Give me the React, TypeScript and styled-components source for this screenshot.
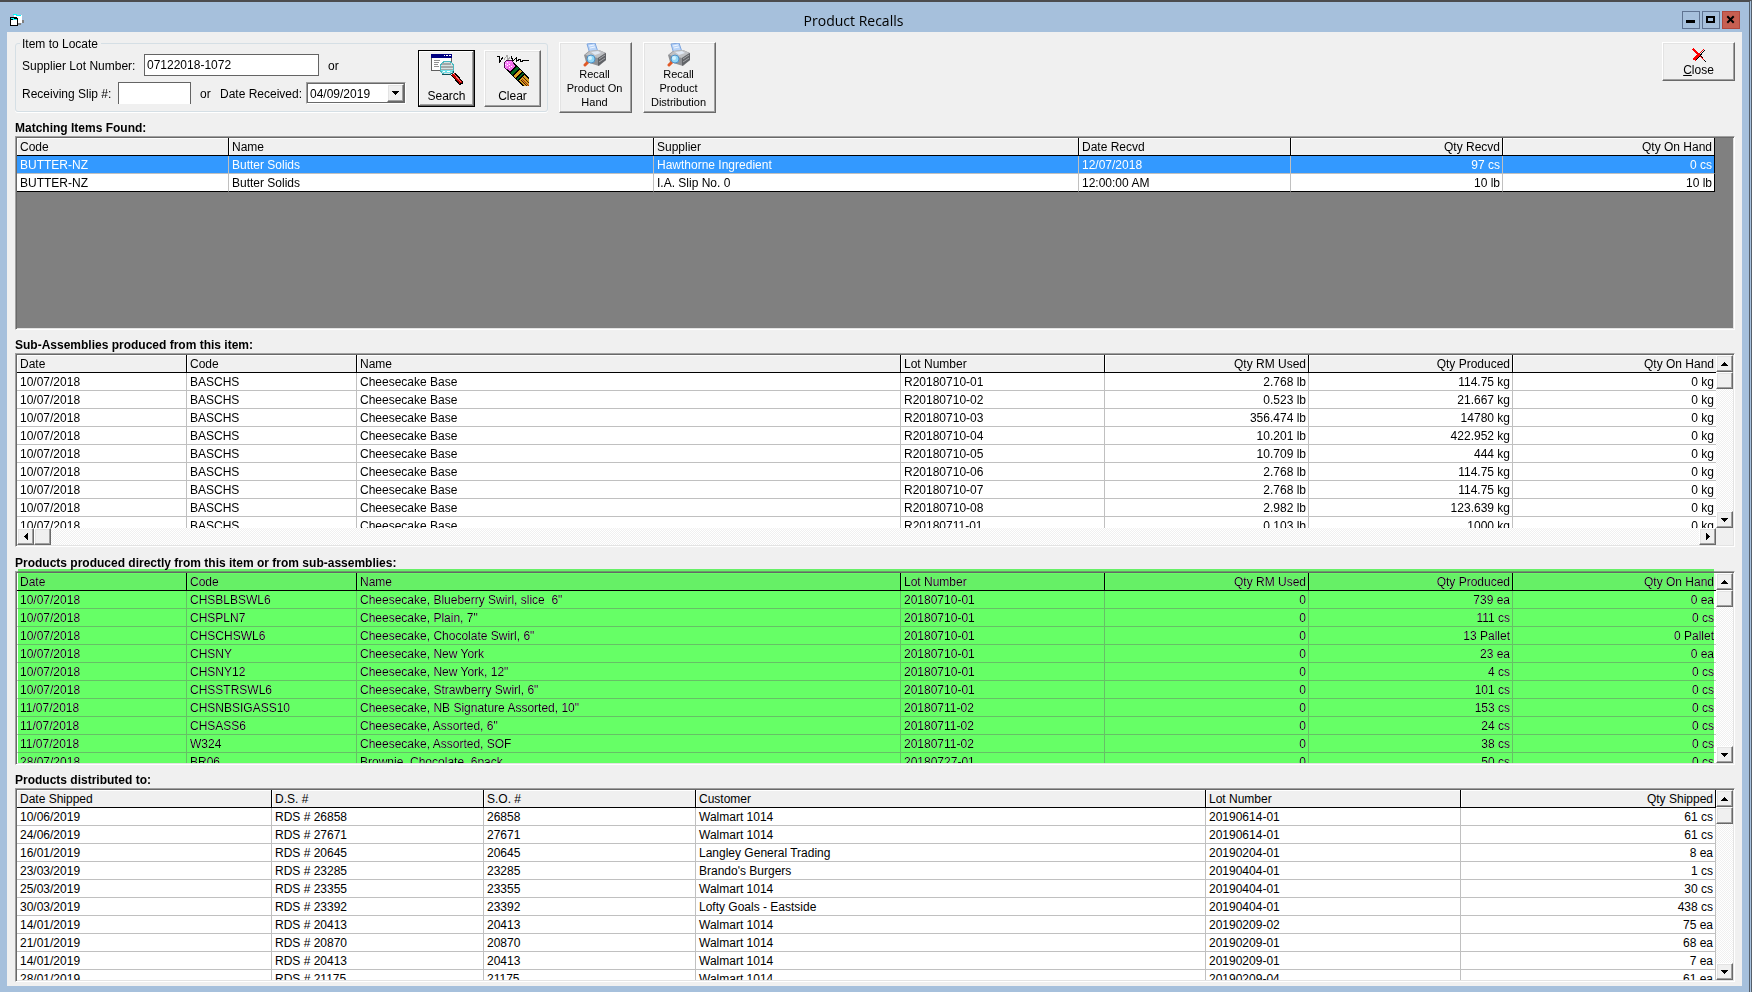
import React from "react";
import styled, { createGlobalStyle, css } from "styled-components";

const GlobalStyle = createGlobalStyle`
  *, *::before, *::after { box-sizing: border-box; }
  body {
    margin: 0;
    background: #a6c0dc;
    color: #000;
    font: 12px/14px "Liberation Sans", Arial, sans-serif;
  }
  button, input, select { font: inherit; color: inherit; }
`;

const raised = css`
  border: 1px solid;
  border-color: #fff #696969 #696969 #fff;
  box-shadow: inset -1px -1px #a0a0a0, inset 1px 1px #e3e3e3;
  background: #f0f0f0;
`;

/* ---------- window frame ---------- */

const Window = styled.main`
  display: flex;
  flex-direction: column;
  min-height: 100vh;
  padding: 0 7px 6px;
  background: #a6c0dc;
  border-top: 2px solid #4c4c4e;
  border-right: 3px double #55606c;
`;

const TitleBar = styled.header`
  display: flex;
  align-items: center;
  height: 30px;
  padding: 6px 2px 0 3px;
`;

const Title = styled.h1`
  flex: 1;
  margin: 0;
  padding-top: 2px;
  text-align: center;
  font: 400 14px/20px "Open Sans", "Noto Sans", sans-serif;
`;

const WindowButtons = styled.div`
  display: flex;
  gap: 2px;
`;

const WindowButton = styled.button<{ $danger?: boolean }>`
  display: grid;
  place-items: center;
  width: 18px;
  height: 18px;
  padding: 0;
  border: 1px solid ${(p) => (p.$danger ? "#b0473c" : "#5f7391")};
  background: ${(p) => (p.$danger ? "#c75f51" : "#a6c0dc")};
`;

const Panel = styled.div`
  flex: 1;
  padding: 4px 7px 4px 8px;
  background: #f0f0f0;
`;

/* ---------- toolbar ---------- */

const Toolbar = styled.form`
  display: flex;
  align-items: flex-start;
  gap: 11px;
`;

const Locate = styled.fieldset`
  display: flex;
  margin: 0;
  padding: 0 6px 4px 4px;
  border: 1px solid #d5dfe5;
  border-radius: 3px;
  box-shadow: 0 1px #fff;
`;

const Legend = styled.legend`
  padding: 2px 3px 0 2px;
  line-height: 12px;
`;

const LocateBody = styled.div`
  display: flex;
  gap: 9px;
`;

const Fields = styled.div`
  display: flex;
  flex-direction: column;
  gap: 6px;
  padding: 4px 3px 0 2px;
`;

const FieldRow = styled.div`
  display: flex;
  align-items: center;
  height: 22px;
`;

const FieldLabel = styled.label<{ $width: number }>`
  width: ${(p) => p.$width}px;
  padding-top: 2px;
  white-space: nowrap;
`;

const Or = styled.span`
  width: 29px;
  padding: 2px 0 0 9px;
`;

const TextBox = styled.input<{ $width: number; $open?: boolean }>`
  width: ${(p) => p.$width}px;
  height: 22px;
  padding: 0 2px;
  border: 1px solid #646464;
  border-bottom-width: ${(p) => (p.$open ? 0 : 1)}px;
  border-radius: 0;
  background: #fff;
  outline: none;
`;

const Combo = styled.div`
  display: flex;
  position: relative;
  width: 100px;
  height: 22px;
  border: 1px solid;
  border-color: #a0a0a0 #fff #fff #a0a0a0;
`;

const DateSelect = styled.select`
  appearance: none;
  flex: 1;
  padding: 2px 2px 0;
  border: 1px solid #696969;
  border-radius: 0;
  background: #fff;
  outline: none;
`;

const ComboArrow = styled.span`
  ${raised}
  position: absolute;
  top: 1px;
  right: 1px;
  bottom: 1px;
  display: grid;
  place-items: center;
  width: 17px;
  pointer-events: none;
`;

const ToolButton = styled.button<{ $default?: boolean }>`
  ${raised}
  display: flex;
  flex-direction: column;
  align-items: center;
  justify-content: space-between;
  width: 57px;
  height: 57px;
  padding: 3px 0;
  ${(p) =>
    p.$default &&
    css`
      border-color: #000;
      box-shadow: inset -1px -1px #696969, inset 1px 1px #fff, inset -2px -2px #a0a0a0;
    `}
`;

const RecallButton = styled.button`
  ${raised}
  width: 73px;
  height: 71px;
  margin-top: 6px;
  padding: 0 7px 4px 5px;
  font-size: 11px;
  line-height: 14px;

  svg { display: block; margin: 0 auto; }
`;

const CloseButton = styled.button`
  ${raised}
  width: 73px;
  height: 39px;
  margin: 6px 0 0 auto;
  padding: 2px 0 0;

  svg { display: block; margin: 0 auto 1px; }
`;

/* ---------- grids ---------- */

const Section = styled.section<{ $highlight?: boolean }>`
  position: relative;
  padding-top: ${(p) => (p.$highlight ? 1 : 0)}px;
`;

const SectionTitle = styled.h2`
  height: 23px;
  margin: 0;
  padding-top: 7px;
  font-size: 12px;
  line-height: 16px;
`;

const Highlight = styled.div`
  position: absolute;
  top: 22px;
  left: 3px;
  right: 21px;
  bottom: 2px;
  background: #66ff66;
  mix-blend-mode: darken;
  pointer-events: none;
`;

const Frame = styled.div`
  display: grid;
  grid-template-columns: minmax(0, 1fr) 17px;
  grid-template-rows: minmax(0, 1fr) auto;
  height: 194px;
  border: 1px solid;
  border-color: #a0a0a0 #fff #fff #a0a0a0;
  background: #808080;
  box-shadow: inset 1px 1px #696969, inset -1px -1px #e3e3e3;
  padding: 1px;
`;

const Viewport = styled.div<{ $filled: boolean }>`
  overflow: hidden;
  padding-right: ${(p) => (p.$filled ? 0 : 1)}px;
`;

const Table = styled.table<{ $closed: boolean; $lastLine: boolean }>`
  width: 100%;
  table-layout: fixed;
  border-collapse: separate;
  border-spacing: 0;

  ${(p) =>
    p.$closed &&
    css`
      tbody tr:last-child td { border-bottom-color: #000; }
      tr td:last-child { border-right-color: #000; }
    `}
  ${(p) =>
    !p.$lastLine &&
    css`
      tr > :last-child { border-right-width: 0; }
    `}
`;

const cellBox = css<{ $right?: boolean }>`
  height: 18px;
  padding: 2px 2px 0 3px;
  border: solid #c0c0c0;
  border-width: 0 1px 1px 0;
  line-height: 15px;
  text-align: ${(p) => (p.$right ? "right" : "left")};
  white-space: pre;
`;

const HeadCell = styled.th<{ $right?: boolean }>`
  ${cellBox}
  border-color: #000;
  background: #f0f0f0;
  box-shadow: inset 1px 1px #fff;
  font-weight: 400;
`;

const Row = styled.tr<{ $selected?: boolean }>`
  background: ${(p) => (p.$selected ? "#3399ff" : "#fff")};
  color: ${(p) => (p.$selected ? "#fff" : "#000")};
`;

const Cell = styled.td<{ $right?: boolean }>`
  ${cellBox}
`;

const ScrollTrack = styled.div<{ $horizontal?: boolean }>`
  display: flex;
  flex-direction: ${(p) => (p.$horizontal ? "row" : "column")};
  background: repeating-conic-gradient(#fff 0 25%, #f0f0f0 0 50%) 0 0 / 2px 2px;
`;

const ScrollButton = styled.button<{ $end?: boolean }>`
  ${raised}
  display: grid;
  place-items: center;
  width: 17px;
  height: 17px;
  padding: 0;
  margin: ${(p) => (p.$end ? "auto 0 0 auto" : "0")};
`;

const Thumb = styled.div`
  ${raised}
  width: 17px;
  height: 17px;
`;

const Corner = styled.div`
  background: #f0f0f0;
`;

/* ---------- icons ---------- */

const arrows = {
  up: "M0 4h7v-1h-1v-1h-1v-1h-1v-1h-1v1h-1v1h-1v1h-1z",
  down: "M0 0h7v1h-1v1h-1v1h-1v1h-1v-1h-1v-1h-1v-1h-1z",
  left: "M4 0v7h-1v-1h-1v-1h-1v-1h-1v-1h1v-1h1v-1h1v-1z",
  right: "M0 0v7h1v-1h1v-1h1v-1h1v-1h-1v-1h-1v-1h-1v-1z",
};

function Arrow({ dir }: { dir: keyof typeof arrows }) {
  const flat = dir === "up" || dir === "down";
  return (
    <svg width={flat ? 7 : 4} height={flat ? 4 : 7} shapeRendering="crispEdges" aria-hidden="true">
      <path d={arrows[dir]} />
    </svg>
  );
}

const FormIcon = () => (
  <svg width="15" height="13" viewBox="0 0 15 13" shapeRendering="crispEdges" aria-hidden="true">
    <path d="M12 6h2v3h-2zM8 9h3v2h-3z" fill="#808080" />
    <path d="M4 1h8v8h-8z" fill="#fff" />
    <path d="M3 0h4v1h-4zM6 1h5v1h-5z" fill="#0ff" />
    <path d="M0 3h7v1h1v8h-8z" fill="#000" />
    <path d="M1 6h6v5h-6z" fill="#fff" />
    <path d="M1 4h3v1h-3zM3 5h4v1h-4z" fill="#0ff" />
  </svg>
);

const SearchIcon = () => (
  <svg width="32" height="32" viewBox="0 0 32 32" shapeRendering="crispEdges" aria-hidden="true">
    <path d="M0 0h21v17h-21z" fill="#606060" />
    <path d="M1 4h19v12h-19z" fill="#fff" />
    <path d="M0 0h21v4h-21z" fill="#000080" />
    <path d="M13 1h1v1h-1zM15 1h2v1h-2zM18 1h2v1h-2z" fill="#fff" />
    <path d="M3 6h6v1h-6zM3 8h5v1h-5zM3 10h4v1h-4zM3 12h5v1h-5z" fill="#909090" />
    <circle cx="16" cy="14" r="7" fill="#d4e4e4" stroke="#48b8c0" strokeWidth="1" />
    <path d="M11 9h9v2h-9zM10 12h12v2h-12zM10 15h12v1h-12z" fill="#a4a8a8" />
    <path d="M10 16h12v1h-1v1h-1v1h-8v-1h-1v-1h-1z" fill="#70e0e8" />
    <path d="M12 17h2v1h-2zM16 17h3v1h-3z" fill="#fff" />
    <path d="M11 20h9v1h-9zM20 19h2v1h-2zM22 17h1v2h-1z" fill="#105058" />
    <path d="M22 20l9 10" stroke="#000" strokeWidth="5" />
    <path d="M22 20l8 9" stroke="#c00000" strokeWidth="3" />
    <path d="M23 20l7 8" stroke="#ff7070" strokeWidth="1" />
  </svg>
);

const EraserIcon = () => (
  <svg width="32" height="32" viewBox="0 0 32 32" aria-hidden="true">
    <g shapeRendering="crispEdges">
      <path d="M0 3l2-1 1 2-1 5 4-6" fill="none" stroke="#000" />
      <path d="M7 6l3-5 1 5 2-3" fill="none" stroke="#a8a8a8" />
      <path d="M14 2l2 5 3-3v4l4-3 1 3 3-2h5" fill="none" stroke="#000" />
      <path d="M12 11L34 33" stroke="#000" strokeWidth="10" />
      <circle cx="12" cy="11" r="5" fill="#ff80ff" stroke="#501050" />
      <path d="M12 11l4 4" stroke="#f070e8" strokeWidth="8" />
      <path d="M16 15l1 1" stroke="#000" strokeWidth="8" />
      <path d="M17 16l2 2" stroke="#006820" strokeWidth="9" />
      <path d="M20 19l2 2" stroke="#d8a020" strokeWidth="9" />
      <path d="M23 22l1 1" stroke="#006820" strokeWidth="9" />
      <path d="M25 24l8 8" stroke="#d8a020" strokeWidth="8" />
      <path d="M24 26l8 8M26 23l8 8" stroke="#501808" strokeWidth="1" />
      <path d="M25 25l8 8" stroke="#a03010" strokeWidth="1" />
      <path d="M8 10h1v1h-1zM10 8h1v1h-1zM10 11h1v1h-1zM12 10h1v1h-1zM14 12h1v1h-1zM12 13h1v1h-1z" fill="#fff" />
    </g>
  </svg>
);

const PrinterIcon = () => (
  <svg width="24" height="24" viewBox="0 0 24 24" aria-hidden="true">
    <path d="M4 1l8-1 3 9-8 2z" fill="#b9d4f8" stroke="#7fa6de" />
    <path d="M6 3l5-1M7 5l5-1" stroke="#eef5ff" />
    <path d="M1 12l5-4 10-1 7 3v7l-7 6-13-4z" fill="#8e9094" />
    <path d="M2 12l5-4 9-1 6 3-7 5z" fill="#bfc1c4" />
    <path d="M8 9l7-1 3 2-6 2z" fill="#dfe8f4" />
    <path d="M15 15l8-5v7l-8 6z" fill="#606266" />
    <path d="M16 16l6-4M16 19l6-4" stroke="#a6a8ac" />
    <path d="M5 19l-3 3" stroke="#e05a28" strokeWidth="3" strokeLinecap="round" />
    <circle cx="8" cy="16" r="4" fill="#90d8f8" stroke="#4f90c8" />
    <circle cx="7" cy="15" r="2" fill="#d4f3ff" />
  </svg>
);

const RedCross = () => (
  <svg width="14" height="14" viewBox="0 0 14 14" shapeRendering="crispEdges" aria-hidden="true">
    <path d="M3 13L13 2M3 2l11 12" stroke="#000" strokeWidth="1" />
    <path d="M1 1l6 6" stroke="#f00" strokeWidth="2" />
    <path d="M7 7l5 5" stroke="#f00" strokeWidth="1" />
    <path d="M2 12l5-6" stroke="#f00" strokeWidth="3" />
    <path d="M7 6l5-5" stroke="#f00" strokeWidth="1" />
  </svg>
);

/* ---------- data ---------- */

type Column = { label: string; width: number; right?: boolean };

const matchingColumns: Column[] = [
  { label: "Code", width: 212 },
  { label: "Name", width: 425 },
  { label: "Supplier", width: 425 },
  { label: "Date Recvd", width: 212 },
  { label: "Qty Recvd", width: 212, right: true },
  { label: "Qty On Hand", width: 212, right: true },
];

const matchingRows = [
  ["BUTTER-NZ", "Butter Solids", "Hawthorne Ingredient", "12/07/2018", "97 cs", "0 cs"],
  ["BUTTER-NZ", "Butter Solids", "I.A. Slip No. 0", "12:00:00 AM", "10 lb", "10 lb"],
];

const producedColumns: Column[] = [
  { label: "Date", width: 170 },
  { label: "Code", width: 170 },
  { label: "Name", width: 544 },
  { label: "Lot Number", width: 204 },
  { label: "Qty RM Used", width: 204, right: true },
  { label: "Qty Produced", width: 204, right: true },
  { label: "Qty On Hand", width: 203, right: true },
];

const subAssemblyRows = [
  ["R20180710-01", "2.768 lb", "114.75 kg"],
  ["R20180710-02", "0.523 lb", "21.667 kg"],
  ["R20180710-03", "356.474 lb", "14780 kg"],
  ["R20180710-04", "10.201 lb", "422.952 kg"],
  ["R20180710-05", "10.709 lb", "444 kg"],
  ["R20180710-06", "2.768 lb", "114.75 kg"],
  ["R20180710-07", "2.768 lb", "114.75 kg"],
  ["R20180710-08", "2.982 lb", "123.639 kg"],
  ["R20180711-01", "0.103 lb", "1000 kg"],
].map((row) => ["10/07/2018", "BASCHS", "Cheesecake Base", ...row, "0 kg"]);

const productRows = [
  ["10/07/2018", "CHSBLBSWL6", "Cheesecake, Blueberry Swirl, slice  6\"", "20180710-01", "0", "739 ea", "0 ea"],
  ["10/07/2018", "CHSPLN7", "Cheesecake, Plain, 7\"", "20180710-01", "0", "111 cs", "0 cs"],
  ["10/07/2018", "CHSCHSWL6", "Cheesecake, Chocolate Swirl, 6\"", "20180710-01", "0", "13 Pallet", "0 Pallet"],
  ["10/07/2018", "CHSNY", "Cheesecake, New York", "20180710-01", "0", "23 ea", "0 ea"],
  ["10/07/2018", "CHSNY12", "Cheesecake, New York, 12\"", "20180710-01", "0", "4 cs", "0 cs"],
  ["10/07/2018", "CHSSTRSWL6", "Cheesecake, Strawberry Swirl, 6\"", "20180710-01", "0", "101 cs", "0 cs"],
  ["11/07/2018", "CHSNBSIGASS10", "Cheesecake, NB Signature Assorted, 10\"", "20180711-02", "0", "153 cs", "0 cs"],
  ["11/07/2018", "CHSASS6", "Cheesecake, Assorted, 6\"", "20180711-02", "0", "24 cs", "0 cs"],
  ["11/07/2018", "W324", "Cheesecake, Assorted, SOF", "20180711-02", "0", "38 cs", "0 cs"],
  ["28/07/2018", "BR06", "Brownie, Chocolate, 6pack", "20180727-01", "0", "50 cs", "0 cs"],
];

const distributedColumns: Column[] = [
  { label: "Date Shipped", width: 255 },
  { label: "D.S. #", width: 212 },
  { label: "S.O. #", width: 212 },
  { label: "Customer", width: 510 },
  { label: "Lot Number", width: 255 },
  { label: "Qty Shipped", width: 255, right: true },
];

const distributedRows = [
  ["10/06/2019", "26858", "Walmart 1014", "20190614-01", "61 cs"],
  ["24/06/2019", "27671", "Walmart 1014", "20190614-01", "61 cs"],
  ["16/01/2019", "20645", "Langley General Trading", "20190204-01", "8 ea"],
  ["23/03/2019", "23285", "Brando's Burgers", "20190404-01", "1 cs"],
  ["25/03/2019", "23355", "Walmart 1014", "20190404-01", "30 cs"],
  ["30/03/2019", "23392", "Lofty Goals - Eastside", "20190404-01", "438 cs"],
  ["14/01/2019", "20413", "Walmart 1014", "20190209-02", "75 ea"],
  ["21/01/2019", "20870", "Walmart 1014", "20190209-01", "68 ea"],
  ["14/01/2019", "20413", "Walmart 1014", "20190209-01", "7 ea"],
  ["28/01/2019", "21175", "Walmart 1014", "20190209-04", "61 ea"],
].map(([date, order, ...rest]) => [date, `RDS # ${order}`, order, ...rest]);

/* ---------- grid component ---------- */

type DataGridProps = {
  title: string;
  columns: Column[];
  rows: string[][];
  selected?: number;
  scroll?: "none" | "vertical" | "both";
  highlight?: boolean;
  lastLine?: boolean;
};

function DataGrid({
  title,
  columns,
  rows,
  selected,
  scroll = "vertical",
  highlight = false,
  lastLine = true,
}: DataGridProps) {
  const scrolls = scroll !== "none";
  return (
    <Section $highlight={highlight}>
      <SectionTitle>{title}</SectionTitle>
      <Frame>
        <Viewport $filled={scrolls}>
          <Table $closed={!scrolls} $lastLine={lastLine} aria-label={title}>
            <colgroup>
              {columns.map((c) => (
                <col key={c.label} width={c.width} />
              ))}
            </colgroup>
            <thead>
              <tr>
                {columns.map((c) => (
                  <HeadCell key={c.label} scope="col" $right={c.right}>
                    {c.label}
                  </HeadCell>
                ))}
              </tr>
            </thead>
            <tbody>
              {rows.map((row, r) => (
                <Row key={r} $selected={r === selected}>
                  {row.map((value, c) => (
                    <Cell key={c} $right={columns[c].right}>
                      {value}
                    </Cell>
                  ))}
                </Row>
              ))}
            </tbody>
          </Table>
        </Viewport>
        {scrolls && (
          <ScrollTrack>
            <ScrollButton type="button" aria-label="Scroll up"><Arrow dir="up" /></ScrollButton>
            <Thumb />
            <ScrollButton type="button" $end aria-label="Scroll down"><Arrow dir="down" /></ScrollButton>
          </ScrollTrack>
        )}
        {scroll === "both" && (
          <>
            <ScrollTrack $horizontal>
              <ScrollButton type="button" aria-label="Scroll left"><Arrow dir="left" /></ScrollButton>
              <Thumb />
              <ScrollButton type="button" $end aria-label="Scroll right"><Arrow dir="right" /></ScrollButton>
            </ScrollTrack>
            <Corner />
          </>
        )}
      </Frame>
      {highlight && <Highlight />}
    </Section>
  );
}

/* ---------- page ---------- */

export default function App() {
  return (
    <>
      <GlobalStyle />
      <Window>
        <TitleBar>
          <FormIcon />
          <Title>Product Recalls</Title>
          <WindowButtons>
            <WindowButton type="button" aria-label="Minimize">
              <svg width="10" height="10" shapeRendering="crispEdges"><path d="M0 5h9v3h-9z" /></svg>
            </WindowButton>
            <WindowButton type="button" aria-label="Maximize">
              <svg width="10" height="10" shapeRendering="crispEdges">
                <path fillRule="evenodd" d="M0 1h9v7h-9zM2 3v3h5v-3z" />
              </svg>
            </WindowButton>
            <WindowButton type="button" $danger aria-label="Close window">
              <svg width="10" height="10"><path d="M2 2l5 5M7 2l-5 5" stroke="#000" strokeWidth="2" strokeLinecap="square" /></svg>
            </WindowButton>
          </WindowButtons>
        </TitleBar>
        <Panel>
          <Toolbar onSubmit={(e) => e.preventDefault()}>
            <Locate>
              <Legend>Item to Locate</Legend>
              <LocateBody>
                <Fields>
                  <FieldRow>
                    <FieldLabel $width={122} htmlFor="lot">Supplier Lot Number:</FieldLabel>
                    <TextBox $width={175} id="lot" defaultValue="07122018-1072" />
                    <Or>or</Or>
                  </FieldRow>
                  <FieldRow>
                    <FieldLabel $width={96} htmlFor="slip">Receiving Slip #:</FieldLabel>
                    <TextBox $width={73} $open id="slip" />
                    <Or>or</Or>
                    <FieldLabel $width={86} htmlFor="received">Date Received:</FieldLabel>
                    <Combo>
                      <DateSelect id="received" defaultValue="04/09/2019">
                        <option>04/09/2019</option>
                      </DateSelect>
                      <ComboArrow><Arrow dir="down" /></ComboArrow>
                    </Combo>
                  </FieldRow>
                </Fields>
                <ToolButton $default type="submit"><SearchIcon />Search</ToolButton>
                <ToolButton type="reset"><EraserIcon />Clear</ToolButton>
              </LocateBody>
            </Locate>
            <RecallButton type="button"><PrinterIcon />Recall Product On Hand</RecallButton>
            <RecallButton type="button"><PrinterIcon />Recall Product Distribution</RecallButton>
            <CloseButton type="button"><RedCross /><u>C</u>lose</CloseButton>
          </Toolbar>

          <DataGrid title="Matching Items Found:" columns={matchingColumns} rows={matchingRows} selected={0} scroll="none" />
          <DataGrid
            title="Sub-Assemblies produced from this item:"
            columns={producedColumns}
            rows={subAssemblyRows}
            scroll="both"
            lastLine={false}
          />
          <DataGrid
            title="Products produced directly from this item or from sub-assemblies:"
            columns={producedColumns}
            rows={productRows}
            highlight
            lastLine={false}
          />
          <DataGrid title="Products distributed to:" columns={distributedColumns} rows={distributedRows} />
        </Panel>
      </Window>
    </>
  );
}
